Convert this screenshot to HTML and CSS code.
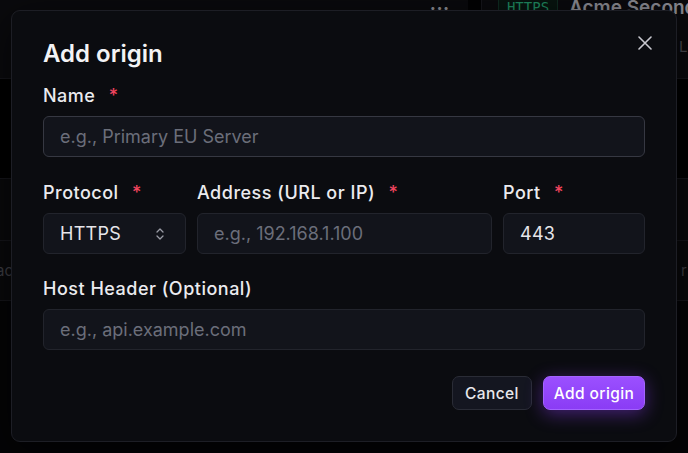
FILE: index.html
```html
<!DOCTYPE html>
<html>
<head>
<meta charset="utf-8">
<link rel="stylesheet" href="styles.css">
</head>
<body>
<div class="page">
  <div class="row row-head">
    <div class="head-line">
      <span class="dots">•••</span>
      <span class="vsep"></span>
      <span class="badge">HTTPS</span>
      <span class="site">Acme Secondary</span>
    </div>
    <div class="sub-line"><span class="sub">Le</span></div>
  </div>
  <div class="row row-black"></div>
  <div class="row row-a"></div>
  <div class="row row-b"><span class="edge-l">ac</span><span class="edge-r">r</span></div>
  <div class="row row-rest"></div>
</div>

<div class="modal" role="dialog">
  <h2 class="title">Add origin</h2>
  <button class="close" aria-label="Close">
    <svg width="14" height="14" viewBox="0 0 14 14"><path d="M1 1L13 13M13 1L1 13" stroke="#c9c9d0" stroke-width="1.6" stroke-linecap="round"/></svg>
  </button>

  <div class="field">
    <label class="label">Name <span class="req">*</span></label>
    <div class="input focused"><span class="ph">e.g., Primary EU Server</span></div>
  </div>

  <div class="grid">
    <div class="field">
      <label class="label">Protocol <span class="req">*</span></label>
      <div class="input select"><span class="val">HTTPS</span>
        <svg width="10" height="14" viewBox="0 0 10 14"><path d="M2 5L5 2L8 5M2 9L5 12L8 9" fill="none" stroke="#9a9ca6" stroke-width="1.3" stroke-linecap="round" stroke-linejoin="round"/></svg>
      </div>
    </div>
    <div class="field">
      <label class="label">Address (URL or IP) <span class="req">*</span></label>
      <div class="input"><span class="ph">e.g., 192.168.1.100</span></div>
    </div>
    <div class="field">
      <label class="label">Port <span class="req">*</span></label>
      <div class="input"><span class="val">443</span></div>
    </div>
  </div>

  <div class="field">
    <label class="label">Host Header (Optional)</label>
    <div class="input"><span class="ph">e.g., api.example.com</span></div>
  </div>

  <div class="actions">
    <button class="btn btn-ghost">Cancel</button>
    <button class="btn btn-primary">Add origin</button>
  </div>
</div>
</body>
</html>
```

FILE: styles.css
```css
* { box-sizing: border-box; }
html, body { margin: 0; padding: 0; }
body {
  width: 688px;
  height: 453px;
  overflow: hidden;
  background: #040406;
  font-family: Inter, "Noto Sans", sans-serif;
  position: relative;
}

/* dimmed page behind */
.page { display: flex; flex-direction: column; }
.row { border-bottom: 1px solid #15151a; position: relative; overflow: hidden; flex-shrink: 0; }
.row-head { height: 79px; background: #0a0a0d; }
.head-line {
  display: flex; align-items: center; height: 24px; margin-top: -5px;
  width: 900px;
}
.head-line > * { flex-shrink: 0; }
.dots { margin-left: 430px; color: #8d8d94; font-size: 10px; letter-spacing: 1px; width: 38px; }
.vsep { width: 14px; height: 24px; background: #020203; border-right: 1px solid #16161b; margin-right: 16px; }
.badge {
  font-family: "DejaVu Sans Mono", monospace; font-size: 14px; color: #1f8a60;
  background: #07140f; border: 1px solid #0f2b21; height: 24px; line-height: 22px;
  width: 60px; text-align: center;
}
.site { margin-left: 11px; font-size: 19px; font-weight: 600; color: #8b8b92; white-space: nowrap; }
.sub-line { height: 54px; display: flex; align-items: center; }
.sub { margin-left: 679px; color: #4a4a50; font-size: 15px; }
.row-black { height: 100px; background: #000001; }
.row-a { height: 62px; background: #09090b; }
.row-b { height: 60px; background: #09090b; display: flex; align-items: center; }
.edge-l { position: absolute; left: -4px; top: 20px; color: #3e3e44; font-size: 15px; }
.edge-r { position: absolute; left: 681px; top: 20px; color: #3e3e44; font-size: 15px; }
.row-rest { height: 160px; background: #040406; border-bottom: none; }

/* modal */
.modal {
  position: absolute;
  left: 11px; top: 10px;
  width: 666px; height: 432px;
  background: #0b0c10;
  border: 1px solid #1d1e25;
  border-radius: 9px;
  padding: 28px 31px 31px;
  box-shadow: 0 10px 40px rgba(0,0,0,0.6);
  display: flex; flex-direction: column;
}
.title {
  margin: 0;
  font-size: 24px; line-height: 30px; font-weight: 600;
  color: #f3f3f5;
  letter-spacing: 0;
}
.close {
  position: absolute; right: 20px; top: 21px;
  width: 22px; height: 22px; padding: 0;
  background: none; border: none;
  display: flex; align-items: center; justify-content: center;
}
.field { display: flex; flex-direction: column; gap: 8px; }
.modal > .field:first-of-type { margin-top: 15px; }
.label {
  font-size: 18px; line-height: 24px; font-weight: 450; color: #ebebef;
  letter-spacing: 0.5px;
}
.req { color: #f0445e; margin-left: 8px; }
.input {
  height: 41px;
  background: #12141b;
  border: 1px solid #22242c;
  border-radius: 6px;
  display: flex; align-items: center;
  padding: 0 16px;
  font-size: 18px;
}
.input.focused { border-color: #363842; }
.ph { color: #6b6e7a; }
.val { color: #e6e6ea; letter-spacing: 0.3px; }
.select { justify-content: space-between; padding-right: 20px; }
.grid {
  display: grid;
  grid-template-columns: 143px 1fr 142px;
  gap: 11px;
  margin-top: 24px;
}
.grid + .field { margin-top: 23px; }
.actions {
  display: flex; justify-content: flex-end; gap: 11px;
  margin-top: auto;
}
.btn {
  height: 34px;
  border-radius: 7px;
  font-family: Inter, "Noto Sans", sans-serif;
  font-size: 15.5px; font-weight: 500;
  padding: 0;
  white-space: nowrap;
  letter-spacing: 0.4px;
  cursor: pointer;
}
.btn-ghost {
  background: #141620; border: 1px solid #2a2c36; color: #e8e8ec;
  width: 80px;
}
.btn-primary {
  width: 102px;
  background: linear-gradient(180deg, #9b50ff 0%, #8a3cf5 100%);
  border: 1px solid #a463ff;
  color: #ffffff;
  box-shadow: 0 4px 18px rgba(139, 60, 245, 0.45);
}
```
